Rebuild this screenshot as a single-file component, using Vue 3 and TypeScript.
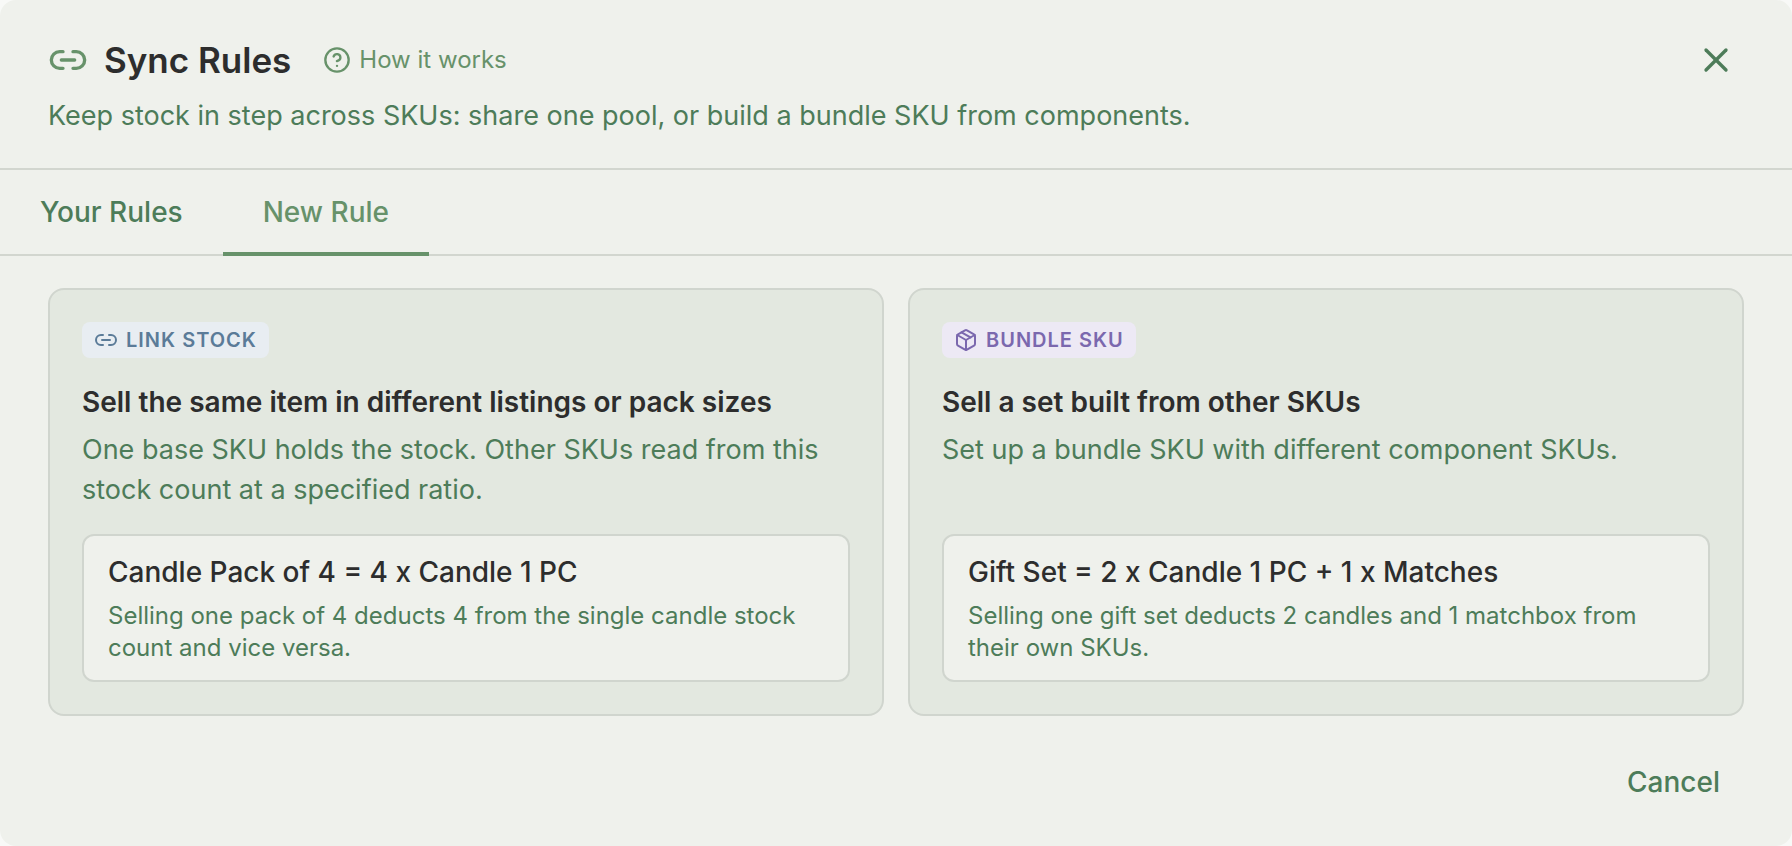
<script setup lang="ts">
import { ref } from 'vue'

interface RuleOption {
  id: 'link' | 'bundle'
  badge: string
  title: string
  text: string
  example: string
  note: string
}

const tabs = ['Your Rules', 'New Rule']
const activeTab = ref('New Rule')

const options: RuleOption[] = [
  {
    id: 'link',
    badge: 'LINK STOCK',
    title: 'Sell the same item in different listings or pack sizes',
    text: 'One base SKU holds the stock. Other SKUs read from this stock count at a specified ratio.',
    example: 'Candle Pack of 4 = 4 x Candle 1 PC',
    note: 'Selling one pack of 4 deducts 4 from the single candle stock count and vice versa.',
  },
  {
    id: 'bundle',
    badge: 'BUNDLE SKU',
    title: 'Sell a set built from other SKUs',
    text: 'Set up a bundle SKU with different component SKUs.',
    example: 'Gift Set = 2 x Candle 1 PC + 1 x Matches',
    note: 'Selling one gift set deducts 2 candles and 1 matchbox from their own SKUs.',
  },
]
</script>

<template>
  <section class="dialog" role="dialog" aria-labelledby="dialog-title">
    <header class="header">
      <div class="title-row">
        <svg class="icon title-icon" viewBox="0 0 24 24" aria-hidden="true">
          <path d="M9 17H7A5 5 0 0 1 7 7h2" />
          <path d="M15 7h2a5 5 0 1 1 0 10h-2" />
          <path d="M8 12h8" />
        </svg>
        <h1 id="dialog-title" class="title">Sync Rules</h1>
        <button class="help" type="button">
          <svg class="icon help-icon" viewBox="0 0 24 24" aria-hidden="true">
            <circle cx="12" cy="12" r="10" />
            <path d="M9.09 9a3 3 0 0 1 5.83 1c0 2-3 3-3 3" />
            <path d="M12 17h.01" />
          </svg>
          How it works
        </button>
        <button class="close" type="button" aria-label="Close">
          <svg class="icon close-icon" viewBox="0 0 24 24" aria-hidden="true">
            <path d="M18 6 6 18" />
            <path d="m6 6 12 12" />
          </svg>
        </button>
      </div>
      <p class="subtitle">
        Keep stock in step across SKUs: share one pool, or build a bundle SKU from components.
      </p>
    </header>

    <nav class="tabs" role="tablist">
      <button
        v-for="tab in tabs"
        :key="tab"
        class="tab"
        :class="{ active: tab === activeTab }"
        type="button"
        role="tab"
        :aria-selected="tab === activeTab"
        @click="activeTab = tab"
      >
        {{ tab }}
      </button>
    </nav>

    <div class="options">
      <button v-for="option in options" :key="option.id" class="card" type="button">
        <span class="badge" :class="option.id">
          <svg v-if="option.id === 'link'" class="icon badge-icon" viewBox="0 0 24 24" aria-hidden="true">
            <path d="M9 17H7A5 5 0 0 1 7 7h2" />
            <path d="M15 7h2a5 5 0 1 1 0 10h-2" />
            <path d="M8 12h8" />
          </svg>
          <svg v-else class="icon badge-icon" viewBox="0 0 24 24" aria-hidden="true">
            <path d="m7.5 4.27 9 5.15" />
            <path d="M21 8a2 2 0 0 0-1-1.73l-7-4a2 2 0 0 0-2 0l-7 4A2 2 0 0 0 3 8v8a2 2 0 0 0 1 1.73l7 4a2 2 0 0 0 2 0l7-4A2 2 0 0 0 21 16Z" />
            <path d="m3.3 7 8.7 5 8.7-5" />
            <path d="M12 22V12" />
          </svg>
          {{ option.badge }}
        </span>
        <span class="card-title">{{ option.title }}</span>
        <span class="card-text">{{ option.text }}</span>
        <span class="example">
          <span class="example-title">{{ option.example }}</span>
          <span class="example-note">{{ option.note }}</span>
        </span>
      </button>
    </div>

    <footer class="footer">
      <button class="cancel" type="button">Cancel</button>
    </footer>
  </section>
</template>

<style>
body {
  margin: 0;
  background: #f8f9f7;
}
</style>

<style scoped>
.dialog {
  box-sizing: border-box;
  min-height: 100vh;
  border-radius: 16px;
  background: #eff1ec;
  color: #4d7c59;
  font-family: Inter, "Liberation Sans", sans-serif;
  font-size: 28px;
  line-height: 40px;
}

button {
  margin: 0;
  padding: 0;
  border: 0;
  background: none;
  color: inherit;
  font: inherit;
  cursor: pointer;
}

.icon {
  display: block;
  flex: none;
  fill: none;
  stroke: currentColor;
  stroke-width: 2;
  stroke-linecap: round;
  stroke-linejoin: round;
}

.header {
  padding: 36px 48px 32px;
  border-bottom: 2px solid #d2d6cf;
}

.title-row {
  display: flex;
  align-items: center;
  height: 48px;
}

.title-icon {
  width: 40px;
  height: 40px;
  margin-right: 16px;
  color: #67926a;
}

.title {
  margin: 0;
  color: #2d2d2d;
  font-size: 35px;
  font-weight: 600;
  line-height: 48px;
}

.help {
  display: flex;
  align-items: center;
  gap: 8px;
  margin-left: 32px;
  color: #67926a;
  font-size: 24px;
  line-height: 32px;
}

.help-icon {
  width: 28px;
  height: 28px;
}

.close {
  margin-left: auto;
  padding: 0 8px;
}

.close-icon {
  width: 40px;
  height: 40px;
}

.subtitle {
  margin: 12px 0 0;
  font-size: 27px;
}

.tabs {
  display: flex;
  border-bottom: 2px solid #d2d6cf;
}

.tab {
  margin-bottom: -2px;
  padding: 22px 40px 20px;
  border-bottom: 4px solid transparent;
  font-weight: 500;
}

.tab.active {
  border-color: #67926a;
  color: #67926a;
}

.options {
  display: grid;
  grid-template-columns: 1fr 1fr;
  gap: 24px;
  padding: 32px 48px;
}

.card {
  display: flex;
  flex-direction: column;
  align-items: flex-start;
  padding: 32px;
  border: 2px solid #d0d5ce;
  border-radius: 16px;
  background: #e3e8e0;
  text-align: left;
}

.badge {
  display: inline-flex;
  align-items: center;
  gap: 8px;
  padding: 0 12px;
  border-radius: 8px;
  font-size: 20px;
  font-weight: 600;
  letter-spacing: 1px;
  line-height: 36px;
}

.badge.link {
  background: #e8edf2;
  color: #5b7b98;
}

.badge.bundle {
  background: #ede9f5;
  color: #7b68ae;
}

.badge-icon {
  width: 24px;
  height: 24px;
}

.card-title {
  margin-top: 24px;
  color: #2d2d2d;
  font-weight: 600;
}

.card-text {
  margin: 8px 0 24px;
  font-size: 27px;
}

.example {
  display: flex;
  flex-direction: column;
  gap: 8px;
  align-self: stretch;
  margin-top: auto;
  padding: 16px 24px;
  border: 2px solid #d0d5ce;
  border-radius: 12px;
  background: #eff1ec;
}

.example-title {
  color: #2d2d2d;
  font-weight: 500;
}

.example-note {
  font-size: 24px;
  line-height: 32px;
}

.footer {
  display: flex;
  justify-content: flex-end;
  padding: 14px 48px 44px;
}

.cancel {
  padding: 0 24px;
  font-weight: 500;
}
</style>
